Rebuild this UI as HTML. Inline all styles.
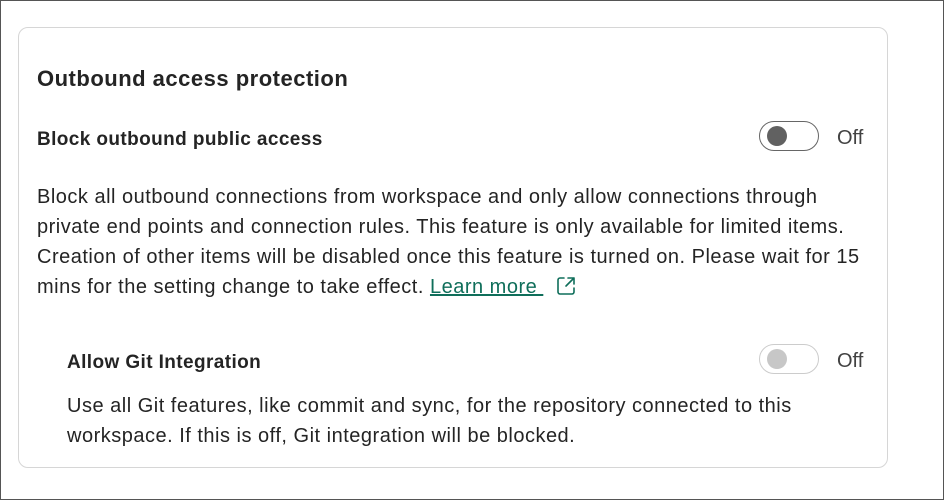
<!DOCTYPE html>
<html><head><style>
body{margin:0;width:944px;height:500px;background:#fff;font-family:"Liberation Sans",sans-serif;color:#242424;overflow:hidden}
.frame{position:absolute;left:0;top:0;width:942px;height:498px;border:1px solid #555}
.card{position:absolute;left:18px;top:27px;width:868px;height:439px;border:1px solid #d6d6d6;border-radius:10px}
.t{position:absolute;white-space:nowrap}
.h{font-weight:bold;font-size:22px;letter-spacing:0.5px}
.s{font-weight:bold;font-size:19px;letter-spacing:0.4px}
.p{font-size:20px;line-height:30px;letter-spacing:0.5px}
.tog{position:absolute;width:58px;height:28px;border:1px solid #666;border-radius:15px;background:#fff}
.tog i{position:absolute;left:7px;top:4px;width:20px;height:20px;border-radius:50%;background:#616161}
.off{position:absolute;font-size:20px;color:#424242}
a{color:#0f6e5a;text-decoration:underline}
</style></head><body>
<div class="frame"></div>
<div class="card"></div>
<div class="t h" style="left:37px;top:66px">Outbound access protection</div>
<div class="t s" style="left:37px;top:129px">Block outbound public access</div>
<div class="tog" style="left:759px;top:121px"><i></i></div>
<div class="off" style="left:837px;top:127px">Off</div>
<div class="t p" style="left:37px;top:182px">Block all outbound connections from workspace and only allow connections through<br>private end points and connection rules. This feature is only available for limited items.<br>Creation of other items will be disabled once this feature is turned on. Please wait for 15<br>mins for the setting change to take effect. <a>Learn more&nbsp;</a> <svg width="22" height="22" viewBox="0 0 22 22" style="vertical-align:-4px;margin-left:6px"><path d="M9 3H5a2 2 0 0 0-2 2v12a2 2 0 0 0 2 2h12a2 2 0 0 0 2-2v-4M13 3h6v6M19 3l-8 8" fill="none" stroke="#0f6e5a" stroke-width="1.6" stroke-linecap="round" stroke-linejoin="round"/></svg></div>
<div class="t s" style="left:67px;top:352px">Allow Git Integration</div>
<div class="tog" style="left:759px;top:344px;border-color:#ccc"><i style="background:#c7c7c7"></i></div>
<div class="off" style="left:837px;top:350px">Off</div>
<div class="t p" style="left:67px;top:391px">Use all Git features, like commit and sync, for the repository connected to this<br>workspace. If this is off, Git integration will be blocked.</div>
</body></html>
